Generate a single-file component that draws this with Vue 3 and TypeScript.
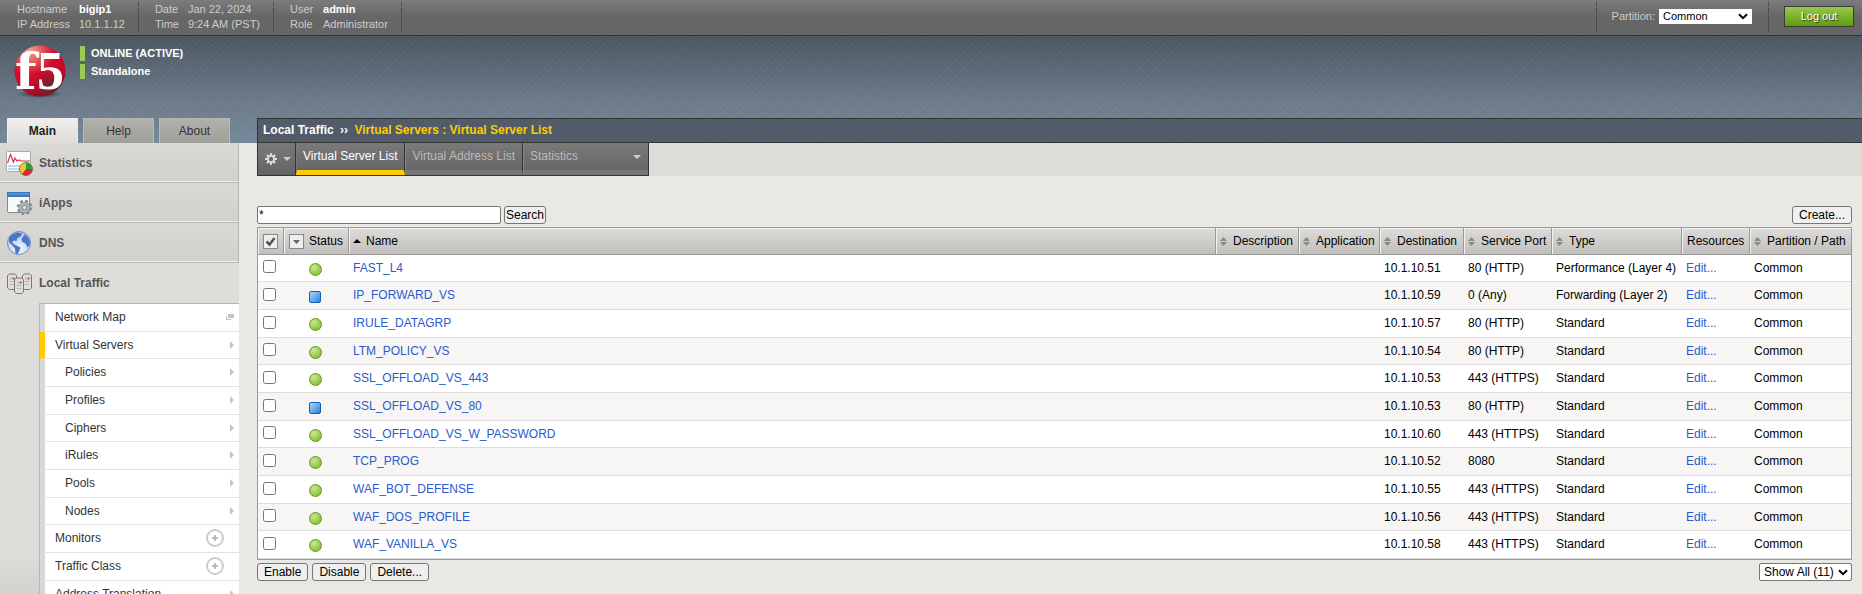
<script setup lang="ts">
import { ref } from 'vue'

interface VirtualServer {
  name: string
  status: 'available' | 'unknown'
  destination: string
  port: string
  type: string
}
interface MenuItem {
  label: string
  sub?: boolean
  active?: boolean
  mark: 'popup' | 'arrow' | 'add'
}

const info = [
  [['Hostname', 'bigip1', true], ['IP Address', '10.1.1.12', false]],
  [['Date', 'Jan 22, 2024', false], ['Time', '9:24 AM (PST)', false]],
  [['User', 'admin', true], ['Role', 'Administrator', false]],
] as [string, string, boolean][][]

const sections = ['Statistics', 'iApps', 'DNS', 'Local Traffic']

const menu: MenuItem[] = [
  { label: 'Network Map', mark: 'popup' },
  { label: 'Virtual Servers', mark: 'arrow', active: true },
  { label: 'Policies', mark: 'arrow', sub: true },
  { label: 'Profiles', mark: 'arrow', sub: true },
  { label: 'Ciphers', mark: 'arrow', sub: true },
  { label: 'iRules', mark: 'arrow', sub: true },
  { label: 'Pools', mark: 'arrow', sub: true },
  { label: 'Nodes', mark: 'arrow', sub: true },
  { label: 'Monitors', mark: 'add' },
  { label: 'Traffic Class', mark: 'add' },
  { label: 'Address Translation', mark: 'arrow' },
]

const columns = [
  { label: 'Description', cls: 'c-desc', sort: true },
  { label: 'Application', cls: 'c-app', sort: true },
  { label: 'Destination', cls: 'c-dest', sort: true },
  { label: 'Service Port', cls: 'c-port', sort: true },
  { label: 'Type', cls: 'c-type', sort: true },
  { label: 'Resources', cls: 'c-res', sort: false },
  { label: 'Partition / Path', cls: 'c-part', sort: true },
]

const vs = (
  name: string,
  status: VirtualServer['status'],
  destination: string,
  port: string,
  type = 'Standard',
): VirtualServer => ({ name, status, destination, port, type })

const servers: VirtualServer[] = [
  vs('FAST_L4', 'available', '10.1.10.51', '80 (HTTP)', 'Performance (Layer 4)'),
  vs('IP_FORWARD_VS', 'unknown', '10.1.10.59', '0 (Any)', 'Forwarding (Layer 2)'),
  vs('IRULE_DATAGRP', 'available', '10.1.10.57', '80 (HTTP)'),
  vs('LTM_POLICY_VS', 'available', '10.1.10.54', '80 (HTTP)'),
  vs('SSL_OFFLOAD_VS_443', 'available', '10.1.10.53', '443 (HTTPS)'),
  vs('SSL_OFFLOAD_VS_80', 'unknown', '10.1.10.53', '80 (HTTP)'),
  vs('SSL_OFFLOAD_VS_W_PASSWORD', 'available', '10.1.10.60', '443 (HTTPS)'),
  vs('TCP_PROG', 'available', '10.1.10.52', '8080'),
  vs('WAF_BOT_DEFENSE', 'available', '10.1.10.55', '443 (HTTPS)'),
  vs('WAF_DOS_PROFILE', 'available', '10.1.10.56', '443 (HTTPS)'),
  vs('WAF_VANILLA_VS', 'available', '10.1.10.58', '443 (HTTPS)'),
]

const filter = ref('*')
const selected = ref<string[]>([])
function toggleAll() {
  selected.value = selected.value.length === servers.length ? [] : servers.map((s) => s.name)
}
</script>

<template>
  <div class="page">
    <header class="topbar">
      <dl v-for="(group, i) in info" :key="i" class="info">
        <div v-for="[k, v, strong] in group" :key="k">
          <dt>{{ k }}</dt>
          <dd :class="{ strong }">{{ v }}</dd>
        </div>
      </dl>
      <div class="partition">
        <label for="partition">Partition:</label>
        <span class="select-wrap">
          <select id="partition"><option>Common</option></select>
          <svg class="chev" viewBox="0 0 10 7" aria-hidden="true"><path d="M1 1.2 5 5.2 9 1.2" /></svg>
        </span>
      </div>
      <div class="session"><button type="button" class="logout">Log out</button></div>
    </header>

    <div class="banner">
      <svg class="logo" viewBox="0 0 54 54" role="img" aria-label="f5">
        <defs>
          <radialGradient id="ball" cx="0.3" cy="0.1" r="0.95">
            <stop offset="0" stop-color="#f0a49c" />
            <stop offset="0.3" stop-color="#dc4a4e" />
            <stop offset="0.5" stop-color="#d20d2c" />
            <stop offset="0.8" stop-color="#c00a26" />
            <stop offset="1" stop-color="#7c1420" />
          </radialGradient>
          <radialGradient id="shade">
            <stop offset="0" stop-color="#1b2026" stop-opacity="0.9" />
            <stop offset="1" stop-color="#1b2026" stop-opacity="0" />
          </radialGradient>
          <radialGradient id="glow" cx="0.68" cy="0.78" r="0.3">
            <stop offset="0" stop-color="#4a3033" stop-opacity="0.7" />
            <stop offset="1" stop-color="#4a3033" stop-opacity="0" />
          </radialGradient>
        </defs>
        <ellipse cx="27" cy="49" rx="23" ry="4" fill="url(#shade)" />
        <circle cx="27" cy="26" r="25.5" fill="url(#ball)" />
        <circle cx="27" cy="26" r="25.5" fill="url(#glow)" />
        <text x="2" y="44" class="logo-f">f</text>
        <text x="24" y="44" class="logo-5">5</text>
      </svg>
      <div class="states">
        <div>ONLINE (ACTIVE)</div>
        <div>Standalone</div>
      </div>
    </div>

    <div class="body">
      <aside class="side">
        <nav class="side-tabs">
          <button type="button" class="on">Main</button>
          <button type="button">Help</button>
          <button type="button">About</button>
        </nav>
        <div class="side-body">
          <a v-for="(s, i) in sections" :key="s" href="#" class="section" :class="{ open: i === 3 }">
            <svg v-if="i === 0" viewBox="0 0 28 28" aria-hidden="true">
              <rect x="1.5" y="2.5" width="24" height="20" rx="1" fill="#fcfcfc" stroke="#aaa" />
              <path d="M3 17h21M3 20h21" stroke="#c5d9ee" stroke-width="2" />
              <path d="M2.500 14 5.500 5.500 8.500 13 10 9l2 3 2-1 2 1h9" fill="none" stroke="#d0393e" stroke-width="1.200" />
              <circle cx="21" cy="20" r="6.500" fill="#f4c92c" stroke="#8d7448" />
              <path d="M21 20V13.500a6.500 6.500 0 0 1 6.500 6.500z" fill="#25a03a" />
              <path d="M21 20h6.500a6.500 6.500 0 0 1-10.500 5z" fill="#d42936" />
            </svg>
            <svg v-else-if="i === 1" viewBox="0 0 28 28" aria-hidden="true">
              <rect x="2.500" y="3.500" width="22" height="20" rx="1" fill="#f7f9fb" stroke="#888" />
              <path d="M2 3h23v5H2z" fill="#3978bd" /><path d="M3 5h21" stroke="#78abe0" />
              <circle cx="19.500" cy="18.500" r="6.500" fill="none" stroke="#7f8b90" stroke-width="2.500" stroke-dasharray="2.600 2.500" />
              <circle cx="19.500" cy="18.500" r="5.500" fill="#aeb8bb" stroke="#828e93" />
              <circle cx="19.500" cy="18.500" r="2.200" fill="#e6eaeb" stroke="#727e83" />
            </svg>
            <svg v-else-if="i === 2" viewBox="0 0 28 28" aria-hidden="true">
              <defs>
                <radialGradient id="sea" cx="0.5" cy="0.75" r="0.8">
                  <stop offset="0" stop-color="#f2f7ff" />
                  <stop offset="1" stop-color="#9dbcf0" />
                </radialGradient>
              </defs>
              <circle cx="14" cy="14" r="11.500" fill="url(#sea)" stroke="#718bbb" />
              <path d="M4 9c2-3 5-5 9-5.500l4 1-1.500 3-3 1.500-1 3-3-.5-1.500 2 3 2.500 2.500 1 3 1.500-1 3-2.500 4-1.500-1-.5-5-2.500-3L4 13z" fill="#4a76c4" />
              <path d="M17 9l3-3.500 3 3 2 4-.5 4-2 2-1.500-3.500-3.500-2-1-2z" fill="#4a76c4" />
            </svg>
            <svg v-else viewBox="0 0 28 28" aria-hidden="true">
              <g v-for="[x, y] in [[2.500, 4.500], [17.500, 4.500], [9.500, 8.500]]" :key="x" :transform="`translate(${x} ${y})`">
                <path d="M0 2 2 .5h5L9 2v12.500L7 16H2l-2-1.500z" fill="#dedede" stroke="#777" />
                <path d="M2 8h5M2 11h5" stroke="#b5b5b5" />
                <path d="M5 4h2v2H5z" fill="#e23b3b" /><path d="M2.500 4h1.500v2H2.500z" fill="#9bc49d" />
              </g>
            </svg>
            {{ s }}
          </a>
          <ul class="menu">
            <li v-for="m in menu" :key="m.label" :class="{ sub: m.sub, active: m.active }">
              <a href="#">{{ m.label }}</a>
              <svg v-if="m.mark === 'popup'" class="m-popup" viewBox="0 0 8 6" aria-hidden="true">
                <path d="M2 0h6v4H2z" /><path d="M0 2h1v3h4v1H0z" />
              </svg>
              <svg v-else-if="m.mark === 'arrow'" class="m-arrow" viewBox="0 0 4 8" aria-hidden="true"><path d="M0 0l4 4-4 4z" /></svg>
              <button v-else type="button" class="m-add" :aria-label="`Add ${m.label}`">
                <svg viewBox="0 0 18 18" aria-hidden="true">
                  <circle cx="9" cy="9" r="8" fill="#fff" stroke="#ccc" stroke-width="2" />
                  <path d="M9 6v6M6 9h6" stroke="#bbb" stroke-width="2" />
                </svg>
              </button>
            </li>
          </ul>
        </div>
      </aside>

      <main class="main">
        <h1 class="crumb">Local Traffic <i>››</i> <span>Virtual Servers : Virtual Server List</span></h1>
        <div class="tabband">
          <nav class="tabs">
            <button type="button" class="gear" aria-label="Preferences">
              <svg class="cog" viewBox="0 0 12 12" aria-hidden="true">
                <path d="M6 0v12M0 6h12M1.800 1.800l8.400 8.400M10.200 1.800l-8.400 8.400" stroke="#ddd" stroke-width="1.800" />
                <circle cx="6" cy="6" r="3.200" fill="#6b6b6b" stroke="#ddd" stroke-width="2" />
              </svg>
              <svg class="down" viewBox="0 0 8 4" aria-hidden="true"><path d="M0 0h8L4 4z" /></svg>
            </button>
            <a href="#" class="tab on">Virtual Server List</a>
            <a href="#" class="tab">Virtual Address List</a>
            <a href="#" class="tab wide">Statistics
              <svg class="down" viewBox="0 0 8 4" aria-hidden="true"><path d="M0 0h8L4 4z" /></svg>
            </a>
          </nav>
        </div>

        <div class="tools">
          <input v-model="filter" type="text" aria-label="Filter" />
          <button type="button" class="btn tight">Search</button>
          <button type="button" class="btn create">Create...</button>
        </div>

        <table class="list">
          <thead>
            <tr>
              <th class="c-check">
                <button type="button" class="box" aria-label="Select all" @click="toggleAll">
                  <svg viewBox="0 0 11 11" aria-hidden="true"><path d="M1.500 5.500 4.500 8.500 9.500 2" fill="none" stroke="#555" stroke-width="2.500" /></svg>
                </button>
              </th>
              <th class="c-status">
                <span class="h">
                  <button type="button" class="box" aria-label="Filter by status">
                    <svg viewBox="0 0 11 11" aria-hidden="true"><path d="M2 4h7L5.500 8z" fill="#666" /></svg>
                  </button>
                  Status
                </span>
              </th>
              <th class="c-name">
                <span class="h"><svg class="up" viewBox="0 0 8 4" aria-hidden="true"><path d="M0 4h8L4 0z" /></svg>Name</span>
              </th>
              <th v-for="c in columns" :key="c.label" :class="c.cls">
                <span class="h sortable">
                  <svg v-if="c.sort" class="sort" viewBox="0 0 7 9" aria-hidden="true"><path d="M0 4h7L3.500 0zM0 5h7L3.500 9z" /></svg>
                  {{ c.label }}
                </span>
              </th>
            </tr>
          </thead>
          <tbody>
            <tr v-for="s in servers" :key="s.name">
              <td class="check"><input v-model="selected" type="checkbox" :value="s.name" :aria-label="`Select ${s.name}`" /></td>
              <td class="status"><span :class="s.status" role="img" :aria-label="s.status"></span></td>
              <td><a href="#">{{ s.name }}</a></td>
              <td></td>
              <td></td>
              <td>{{ s.destination }}</td>
              <td>{{ s.port }}</td>
              <td>{{ s.type }}</td>
              <td><a href="#">Edit...</a></td>
              <td>Common</td>
            </tr>
          </tbody>
        </table>

        <div class="actions">
          <button type="button" class="btn">Enable</button>
          <button type="button" class="btn">Disable</button>
          <button type="button" class="btn">Delete...</button>
          <span class="select-wrap pager">
            <select aria-label="Rows shown"><option>Show All (11)</option></select>
            <svg class="chev" viewBox="0 0 10 7" aria-hidden="true"><path d="M1 1.200 5 5.200 9 1.200" /></svg>
          </span>
        </div>
      </main>
    </div>
  </div>
</template>

<style>
html,
body {
  height: 100%;
  margin: 0;
  overflow: hidden;
  background: #e9e8e4;
}
#app {
  height: 100%;
}
</style>

<style scoped>
* {
  box-sizing: border-box;
}
.page {
  height: 100%;
  overflow: hidden;
  display: flex;
  flex-direction: column;
  font: 12px/16px "Liberation Sans", Arial, sans-serif;
  color: #000;
  background:
    repeating-linear-gradient(135deg, rgba(255, 255, 255, 0.04) 0 1px, transparent 1px 4px) 0 36px / 100% 107px no-repeat,
    linear-gradient(#4c5661, #6b7988 60%, #76899a) 0 36px / 100% 107px no-repeat,
    #e9e8e4;
}
button,
input,
select {
  font: inherit;
  color: inherit;
  margin: 0;
}
button {
  padding: 0;
}
a {
  text-decoration: none;
}
svg {
  display: block;
  flex: none;
}

/* top bar */
.topbar {
  flex: none;
  height: 36px;
  display: flex;
  align-items: flex-start;
  background: linear-gradient(#7c7c7c, #666 50%, #666);
  border-bottom: 1px solid #333;
  font-size: 11px;
  line-height: 15px;
  color: #ccc;
}
.info {
  margin: 2px 0 0;
  height: 29px;
  padding: 0 13px 0 16px;
  border-right: 1px dotted #333;
}
.info:first-child {
  padding-left: 17px;
}
.info div {
  display: flex;
  column-gap: 9px;
}
.info dt {
  width: 24px;
}
.info:first-child dt {
  width: 53px;
}
.info dd {
  margin: 0;
}
.info .strong {
  color: #fff;
  font-weight: bold;
}
.partition {
  margin: 2px 0 0 auto;
  height: 29px;
  display: flex;
  align-items: center;
  gap: 4px;
  padding: 0 16px 0 15px;
  border-left: 1px dotted #333;
  border-right: 1px dotted #333;
}
.session {
  padding: 6px 8px 0 15px;
}
.logout {
  width: 70px;
  height: 21px;
  border: 1px solid #3c3c3c;
  background: linear-gradient(#96c94b, #5f9d0e);
  color: #fff;
  text-shadow: 1px 1px 1px #333;
}
.select-wrap {
  display: grid;
  align-items: center;
}
.select-wrap > * {
  grid-area: 1 / 1;
}
.chev {
  width: 10px;
  height: 7px;
  justify-self: end;
  margin-right: 4px;
  fill: none;
  stroke: #000;
  stroke-width: 2;
  pointer-events: none;
}
select {
  appearance: none;
  background: #fff;
  color: #000;
}
.partition select {
  width: 93px;
  height: 15px;
  padding: 0 3px;
  border: 1px solid #fff;
  border-radius: 0;
  line-height: 13px;
}

/* banner */
.banner {
  flex: none;
  height: 82px;
  display: flex;
  padding: 9px 0 0 13px;
}
.logo {
  width: 54px;
  height: 54px;
  overflow: visible;
}
.logo-f,
.logo-5 {
  fill: #fff;
  font-weight: bold;
}
.logo-f {
  font-family: "DejaVu Serif", serif;
  font-size: 50px;
}
.logo-5 {
  font-family: "Liberation Serif", serif;
  font-size: 54px;
}
.states {
  display: grid;
  align-content: start;
  gap: 3px;
  padding: 1px 0 0 13px;
}
.states div {
  border-left: 5px solid #9c5;
  padding-left: 6px;
  font-size: 11px;
  line-height: 15px;
  font-weight: bold;
  color: #fff;
}

/* side */
.body {
  flex: 1;
  min-height: 0;
  display: flex;
}
.side {
  width: 239px;
  flex: none;
  display: flex;
  flex-direction: column;
}
.side-tabs {
  display: flex;
  gap: 5px;
  padding-left: 7px;
  height: 25px;
  flex: none;
}
.side-tabs button {
  width: 71px;
  border: 1px solid #b8b8b4;
  border-bottom: 0;
  background: linear-gradient(#b0b0ac, #a0a09b);
  color: #333;
}
.side-tabs .on {
  background: linear-gradient(#efeeec, #dddcd8);
  border-color: #eee;
  font-weight: bold;
  color: #222;
}
.side-body {
  flex: 1;
  min-height: 0;
  overflow: hidden;
  background: linear-gradient(#deddd9 90%, #d3d2ce);
}
.section {
  height: 40px;
  display: flex;
  align-items: center;
  gap: 6px;
  padding: 0 0 0 5px;
  background: linear-gradient(#dad9d6, #d1d0cc);
  border-right: 1px solid #b6b6b6;
  border-bottom: 1px solid #b6b6b6;
  box-shadow: inset 0 -1px #f0f0ee;
  font-weight: bold;
  color: #555;
}
.section svg {
  width: 28px;
  height: 28px;
}
.section.open {
  background: none;
  border-color: transparent;
  box-shadow: none;
}
.menu {
  list-style: none;
  margin: 0 0 0 39px;
  padding: 0;
  border: 1px solid #b6b6b6;
  border-width: 1px 0 0 1px;
}
.menu li {
  height: 28px;
  display: flex;
  align-items: center;
  justify-content: space-between;
  border-left: 5px solid #d8d8d8;
  border-bottom: 1px solid #e2e2e2;
  background: #fff;
  padding: 0 5px 1px 10px;
}
.menu li:nth-child(3n + 2) {
  height: 27px;
}
.menu li.sub {
  padding-left: 20px;
}
.menu li.active {
  border-left-color: #fc0;
}
.menu a {
  color: #333;
}
.menu svg {
  fill: #c4c4c4;
}
.m-popup {
  width: 8px;
  height: 6px;
}
.m-arrow {
  width: 4px;
  height: 8px;
}
.m-add {
  border: 0;
  background: none;
  margin-right: 10px;
}
.m-add svg {
  width: 18px;
  height: 18px;
}

/* main */
.main {
  flex: 1;
  min-width: 0;
  margin-left: 18px;
}
.crumb {
  margin: 0;
  height: 25px;
  padding: 0 5px;
  border: 1px solid #333;
  border-right: 0;
  background:
    repeating-linear-gradient(135deg, rgba(255, 255, 255, 0.03) 0 1px, transparent 1px 4px),
    #505b67;
  font-size: 12px;
  line-height: 22px;
  color: #fff;
}
.crumb i {
  font-style: normal;
  margin: 0 3px;
}
.crumb span {
  color: #fc0;
}
.tabband {
  height: 33px;
  background: #deddd9;
  display: flex;
}
.tabs {
  display: flex;
  background: linear-gradient(#7a7a7a, #636363);
  border: 1px solid #333;
  border-top: 0;
  color: #ccc;
}
.tabs > * {
  border-right: 1px solid #333;
}
.tabs > :last-child {
  border-right: 0;
}
.gear {
  display: flex;
  align-items: center;
  gap: 6px;
  width: 38px;
  padding-left: 7px;
  border: 0;
  border-right: 1px solid #333;
  background: none;
}
.cog {
  width: 12px;
  height: 12px;
}
.down {
  width: 8px;
  height: 4px;
  fill: #ccc;
}
.tab {
  border-left: 1px solid #888;
  border-bottom: 5px solid #777;
  color: #bbb;
  padding: 0 7px 0 6px;
  line-height: 27px;
}
.tab.on {
  border-bottom-color: #fc0;
  border-left-color: #777;
  color: #fff;
}
.tab.wide {
  width: 125px;
  display: flex;
  justify-content: space-between;
}
.tab .down {
  margin-top: 12px;
}
.tools {
  display: flex;
  align-items: center;
  gap: 3px;
  padding: 30px 10px 3px 0;
}
.tools input {
  width: 244px;
  height: 18px;
  border: 1px solid #767676;
  border-radius: 2px;
  padding: 0 1px;
  background: #fff;
}
.btn {
  height: 18px;
  padding: 0 6px;
  border: 1px solid #767676;
  border-radius: 3px;
  background: #efefef;
  color: #000;
}
.tight {
  padding: 0 1px;
}
.create {
  margin-left: auto;
}

.list {
  width: calc(100% - 10px);
  table-layout: fixed;
  border-collapse: separate;
  border-spacing: 0;
  border: 1px solid #999;
  background: #fff;
}
.list th {
  height: 27px;
  padding: 0 0 0 4px;
  font-weight: normal;
  text-align: left;
  white-space: nowrap;
  background: linear-gradient(#dddcda, #c0bfbb);
  border-right: 1px solid #999;
  border-bottom: 1px solid #999;
  box-shadow: inset 1px 1px #f2f2f0;
}
.list th:last-child {
  border-right: 0;
}
.h {
  display: flex;
  align-items: center;
  gap: 5px;
}
.sortable {
  gap: 6px;
}
.c-check { width: 26px; }
.c-status { width: 65px; }
.c-desc { width: 83px; }
.c-app { width: 81px; }
.c-dest { width: 84px; }
.c-port { width: 88px; }
.c-type { width: 130px; }
.c-res { width: 68px; }
.c-part { width: 101px; }
.list .c-check,
.list .c-status,
.list .c-res {
  padding-left: 5px;
}
.box {
  display: block;
  width: 15px;
  height: 15px;
  padding: 1px;
  border: 1px solid #888;
  background: #eee;
}
.box svg {
  width: 11px;
  height: 11px;
}
.up {
  width: 8px;
  height: 4px;
}
.sort {
  width: 7px;
  height: 9px;
  fill: #888;
}
.list td {
  height: 28px;
  padding: 0 0 1px 4px;
  border-bottom: 1px solid #ddd;
  white-space: nowrap;
}
.list .check {
  padding-bottom: 3px;
}
.list tbody tr:nth-child(3n + 1) td {
  height: 27px;
}
.list tbody tr:nth-child(even) {
  background: #f7f6f5;
}
.list a {
  color: #2a5bcc;
}
.list input {
  display: block;
  width: 13px;
  height: 13px;
  margin-left: 1px;
}
.status span {
  display: block;
  margin: 3px 0 0 21px;
}
.available {
  width: 13px;
  height: 13px;
  border: 1px solid #5d9a1c;
  border-radius: 50%;
  background: radial-gradient(circle at 35% 30%, #c8e89a, #8fc63c 70%);
}
.unknown {
  width: 12px;
  height: 12px;
  border: 1px solid #0e60b8;
  border-radius: 2px;
  background: linear-gradient(135deg, #b3d5f5, #2c82dc);
}
.actions {
  display: flex;
  align-items: flex-start;
  gap: 4px;
  padding: 3px 10px 0 0;
}
.pager {
  margin-left: auto;
}
.pager select {
  width: 93px;
  height: 18px;
  padding: 0 4px;
  border: 1px solid #767676;
  border-radius: 2px;
}
</style>
